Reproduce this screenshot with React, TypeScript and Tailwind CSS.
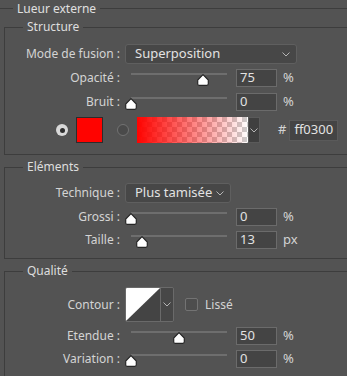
import React from 'react';

const Chevron = () => (
  <svg width="8" height="5" viewBox="0 0 8 5" className="shrink-0">
    <polyline points="0.5,0.5 4,4 7.5,0.5" fill="none" stroke="#b4b4b4" strokeWidth="1" />
  </svg>
);

const Thumb = () => (
  <svg width="12" height="12" viewBox="0 0 12 12">
    <path d="M6 0.7 L11.3 6 L11.3 9.8 Q11.3 11.3 9.8 11.3 L2.2 11.3 Q0.7 11.3 0.7 9.8 L0.7 6 Z" fill="#ffffff" stroke="#262626" strokeWidth="1.2" />
  </svg>
);

const Label = ({ children }: { children: React.ReactNode }) => (
  <div className="w-[115px] text-right text-[12px] text-[#d4d4d4] whitespace-nowrap">{children}</div>
);

const Slider = ({ frac }: { frac: number }) => (
  <div className="relative ml-[5px] w-[102px] h-[18px]">
    <div className="absolute top-[4px] left-[6px] right-0 h-[2px] bg-[#6e6e6e]" />
    <div className="absolute top-[5px]" style={{ left: `${frac * 96}px` }}><Thumb /></div>
  </div>
);

const NumField = ({ value, unit }: { value: string, unit: string }) => (
  <>
    <div className="ml-[9px] w-[41px] h-[18px] bg-[#444444] border border-[#6b6b6b] flex items-center pl-[3px] text-[13px] text-[#e2e2e2]">{value}</div>
    <div className="ml-[6px] text-[13px] text-[#d4d4d4]">{unit}</div>
  </>
);

const SliderRow = ({ label, frac, value, unit, className = '' }: { label: string, frac: number, value: string, unit: string, className?: string }) => (
  <div className={`flex items-center h-[18px] ${className}`}>
    <Label>{label}</Label>
    <Slider frac={frac} />
    <NumField value={value} unit={unit} />
  </div>
);

const Select = ({ text, width }: { text: string, width: string }) => (
  <div className={`ml-[5px] ${width} h-[20px] bg-[#474747] border border-[#5f5f5f] rounded-[3px] flex items-center justify-between pl-[9px] pr-[6px] text-[13px] text-[#e2e2e2]`}>
    <span>{text}</span>
    <Chevron />
  </div>
);

const Group = ({ title, children, className = '' }: { title: string, children: React.ReactNode, className?: string }) => (
  <fieldset className={`ml-[4px] border-t border-l border-b border-[#3d3d3d] ${className}`}>
    <legend className="ml-[18px] px-[4px] h-[16px] leading-[16px] text-[12px] text-[#dedede]">{title}</legend>
    {children}
  </fieldset>
);

export default function App() {
  return (
    <div className="w-[347px] h-[376px] overflow-hidden bg-[#535353] font-['Noto_Sans',sans-serif]">
      <fieldset className="border-t border-[#3d3d3d]">
        <legend className="ml-[13px] px-[4px] h-[17px] leading-[17px] text-[12px] text-[#e0e0e0]">Lueur externe</legend>

        <Group title="Structure" className="mt-[2px] pb-[11px]">
          <div className="flex items-center h-[20px] mt-[9px]">
            <Label>Mode de fusion :</Label>
            <Select text="Superposition" width="w-[172px]" />
          </div>
          <SliderRow label="Opacité :" frac={0.75} value="75" unit="%" className="mt-[5px]" />
          <SliderRow label="Bruit :" frac={0} value="0" unit="%" className="mt-[6px]" />
          <div className="flex items-center h-[26px] mt-[6px]">
            <div className="ml-[51px] w-[12px] h-[12px] rounded-full bg-[#d9d9d9] flex items-center justify-center">
              <div className="w-[5px] h-[5px] rounded-full bg-[#2e2e2e]" />
            </div>
            <div className="ml-[8px] w-[27px] h-[26px] bg-[#ff0300] border border-[#2c2c2c]" />
            <div className="ml-[14px] w-[12px] h-[12px] rounded-full border border-[#727272] bg-[#4a4a4a]" />
            <div className="ml-[8px] w-[111px] h-[26px] bg-[image:repeating-conic-gradient(#cdcdcd_0%_25%,#ffffff_0%_50%)] bg-[length:10px_10px]">
              <div className="w-full h-full bg-linear-to-r from-[#ff0300] to-[#ff0300]/0" />
            </div>
            <div className="w-[12px] h-[26px] bg-[#3f3f3f] border border-[#5a5a5a] flex items-center justify-center">
              <Chevron />
            </div>
            <div className="ml-[18px] text-[13px] text-[#d4d4d4]">#</div>
            <div className="ml-[3px] w-[49px] h-[21px] bg-[#444444] border border-[#5a5a5a] flex items-center pl-[4px] text-[13px] text-[#e2e2e2]">ff0300</div>
          </div>
        </Group>

        <Group title="Eléments" className="mt-[4px] pb-[9px]">
          <div className="flex items-center h-[20px] mt-[8px]">
            <Label>Technique :</Label>
            <Select text="Plus tamisée" width="w-[106px]" />
          </div>
          <SliderRow label="Grossi :" frac={0} value="0" unit="%" className="mt-[5px]" />
          <SliderRow label="Taille :" frac={0.11} value="13" unit="px" className="mt-[5px]" />
        </Group>

        <Group title="Qualité" className="mt-[4px] pb-[10px]">
          <div className="flex items-center h-[35px] mt-[8px]">
            <Label>Contour :</Label>
            <div className="ml-[5px] w-[49px] h-[35px] border border-[#6a6a6a] rounded-[2px] flex overflow-hidden">
              <svg width="34" height="33" viewBox="0 0 34 33" className="shrink-0">
                <rect width="34" height="33" fill="#444444" />
                <polygon points="0,0 34,0 0,33" fill="#ffffff" />
              </svg>
              <div className="flex-1 bg-[#474747] border-l border-[#6a6a6a] flex items-center justify-center">
                <Chevron />
              </div>
            </div>
            <div className="ml-[11px] w-[13px] h-[13px] rounded-[2px] border border-[#737373] bg-[#4d4d4d]" />
            <div className="ml-[7px] text-[12px] text-[#d4d4d4]">Lissé</div>
          </div>
          <SliderRow label="Etendue :" frac={0.5} value="50" unit="%" className="mt-[5px]" />
          <SliderRow label="Variation :" frac={0} value="0" unit="%" className="mt-[5px]" />
        </Group>
      </fieldset>
    </div>
  );
}
